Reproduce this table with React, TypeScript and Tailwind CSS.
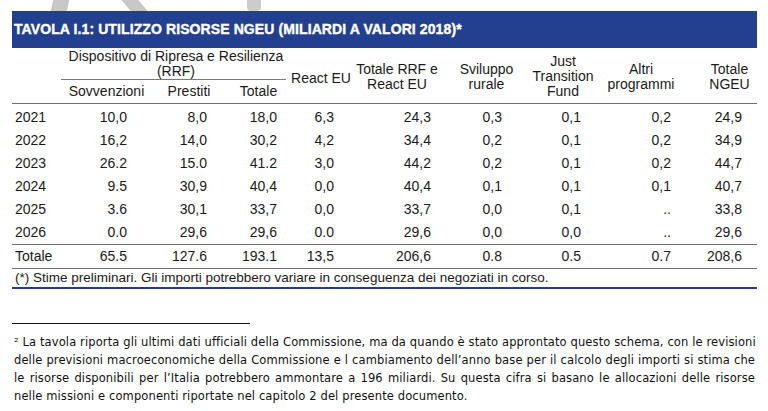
// App.tsx
// Tavola I.1 — utilizzo risorse NGEU, table with header bar, totals row and page footnote
const rows = [
  ["2021", "10,0", "8,0", "18,0", "6,3", "24,3", "0,3", "0,1", "0,2", "24,9"],
  ["2022", "16,2", "14,0", "30,2", "4,2", "34,4", "0,2", "0,1", "0,2", "34,9"],
  ["2023", "26.2", "15.0", "41.2", "3,0", "44,2", "0,2", "0,1", "0,2", "44,7"],
  ["2024", "9.5", "30,9", "40,4", "0,0", "40,4", "0,1", "0,1", "0,1", "40,7"],
  ["2025", "3.6", "30,1", "33,7", "0,0", "33,7", "0,0", "0,1", "..", "33,8"],
  ["2026", "0.0", "29,6", "29,6", "0.0", "29,6", "0,0", "0,0", "..", "29,6"],
];

const totals = ["Totale", "65.5", "127.6", "193.1", "13,5", "206,6", "0.8", "0.5", "0.7", "208,6"];

// right padding of each numeric column, so numbers line up as in the print
const numPad = ["", "pr-[21px]", "pr-[23px]", "pr-[11px]", "pr-[22px]", "pr-[21px]", "pr-[18px]", "pr-[23px]", "pr-[19px]", "pr-[15px]"];

const grid = "grid grid-cols-[52px_84px_82px_58px_68px_96px_68px_84px_86px_67px]";

function DataRow({ cells }: { cells: string[] }) {
  return (
    <div className={`${grid} h-[23px] items-center`}>
      {cells.map((c, i) => (
        <div key={i} className={i === 0 ? "pl-[3px] text-left" : `text-right ${numPad[i]}`}>
          {c}
        </div>
      ))}
    </div>
  );
}

export default function App() {
  return (
    <div className="relative w-[768px] h-[411px] bg-white overflow-hidden">
      {/* faint watermark strokes above the bar */}
      <div className="absolute left-[52px] top-0 w-[16px] h-[11px] bg-[#c8c8c8] -skew-x-[12deg]" />
      <div className="absolute left-[126px] top-0 w-[17px] h-[11px] bg-[#c8c8c8] skew-x-[40deg]" />
      <div className="absolute left-[247px] top-0 w-[14px] h-[11px] bg-[#cccccc] rounded-b-[4px]" />

      <div className="relative pt-[11px] px-[12px] w-[757px] box-content">
        <div className="w-[745px] h-[37px] bg-[#22408f] flex items-center pl-[2px]">
          <span className="font-['Liberation_Sans',Arial,sans-serif] font-bold text-[14px] tracking-[0.1px] text-white [-webkit-text-stroke:0.4px_white]">
            TAVOLA I.1: UTILIZZO RISORSE NGEU (MILIARDI A VALORI 2018)*
          </span>
        </div>

        <div className="w-[745px] font-['Liberation_Sans',Arial,sans-serif] text-[14px] text-[#1a1a1a]">
          {/* header */}
          <div className={`${grid} h-[56px] border-b border-[#6f6f6f] leading-[15px] text-center`}>
            <div />
            <div className="col-span-3 flex flex-col">
              <div className="pt-[1px] h-[32px] ml-[-3px] mr-[2px] border-b border-[#7a7a7a]">
                <div className="pl-[5px]">Dispositivo di Ripresa e Resilienza</div>
                <div className="pl-[5px]">(RRF)</div>
              </div>
              <div className="grid grid-cols-[84px_82px_58px] pt-[4px]">
                <div className="pl-[1px]">Sovvenzioni</div>
                <div>Prestiti</div>
                <div className="pr-[1px]">Totale</div>
              </div>
            </div>
            <div className="flex items-center justify-center pt-[6px] pr-[2px]">React EU</div>
            <div className="flex flex-col justify-center pt-[2px] pr-[14px]">
              <div>Totale RRF e</div>
              <div>React EU</div>
            </div>
            <div className="flex flex-col justify-center pt-[2px] pl-[1px]">
              <div>Sviluppo</div>
              <div>rurale</div>
            </div>
            <div className="flex flex-col justify-center pt-[1px] pl-[2px]">
              <div>Just</div>
              <div>Transition</div>
              <div>Fund</div>
            </div>
            <div className="flex flex-col justify-center pt-[2px] pr-[12px]">
              <div>Altri</div>
              <div>programmi</div>
            </div>
            <div className="flex flex-col justify-center pt-[2px] pl-[12px]">
              <div>Totale</div>
              <div>NGEU</div>
            </div>
          </div>

          {/* body */}
          <div className="pt-[2px] border-b border-[#6f6f6f]">
            {rows.map((r) => (
              <DataRow key={r[0]} cells={r} />
            ))}
          </div>
          <div className="border-b border-[#6f6f6f]">
            <DataRow cells={totals} />
          </div>
          <div className="h-[20px] flex items-center pl-[3px] text-[13.5px] border-b-2 border-[#243f86]">
            (*) Stime preliminari. Gli importi potrebbero variare in conseguenza dei negoziati in corso.
          </div>
        </div>

        {/* page footnote */}
        <div className="mt-[34px] w-[238px] border-t border-[#111]" />
        <div className="mt-[9px] w-[743px] pl-[2px] font-['DejaVu_Sans',Tahoma,sans-serif] text-[11.5px] tracking-[0.12px] leading-[18px] text-[#111]">
          <div className="whitespace-nowrap text-justify [text-align-last:justify]">
            ² La tavola riporta gli ultimi dati ufficiali della Commissione, ma da quando è stato approntato questo schema, con le revisioni
          </div>
          <div className="whitespace-nowrap text-justify [text-align-last:justify]">
            delle previsioni macroeconomiche della Commissione e l cambiamento dell’anno base per il calcolo degli importi si stima che
          </div>
          <div className="whitespace-nowrap text-justify [text-align-last:justify]">
            le risorse disponibili per l’Italia potrebbero ammontare a 196 miliardi. Su questa cifra si basano le allocazioni delle risorse
          </div>
          <div className="whitespace-nowrap">nelle missioni e componenti riportate nel capitolo 2 del presente documento.</div>
        </div>
      </div>
    </div>
  );
}
